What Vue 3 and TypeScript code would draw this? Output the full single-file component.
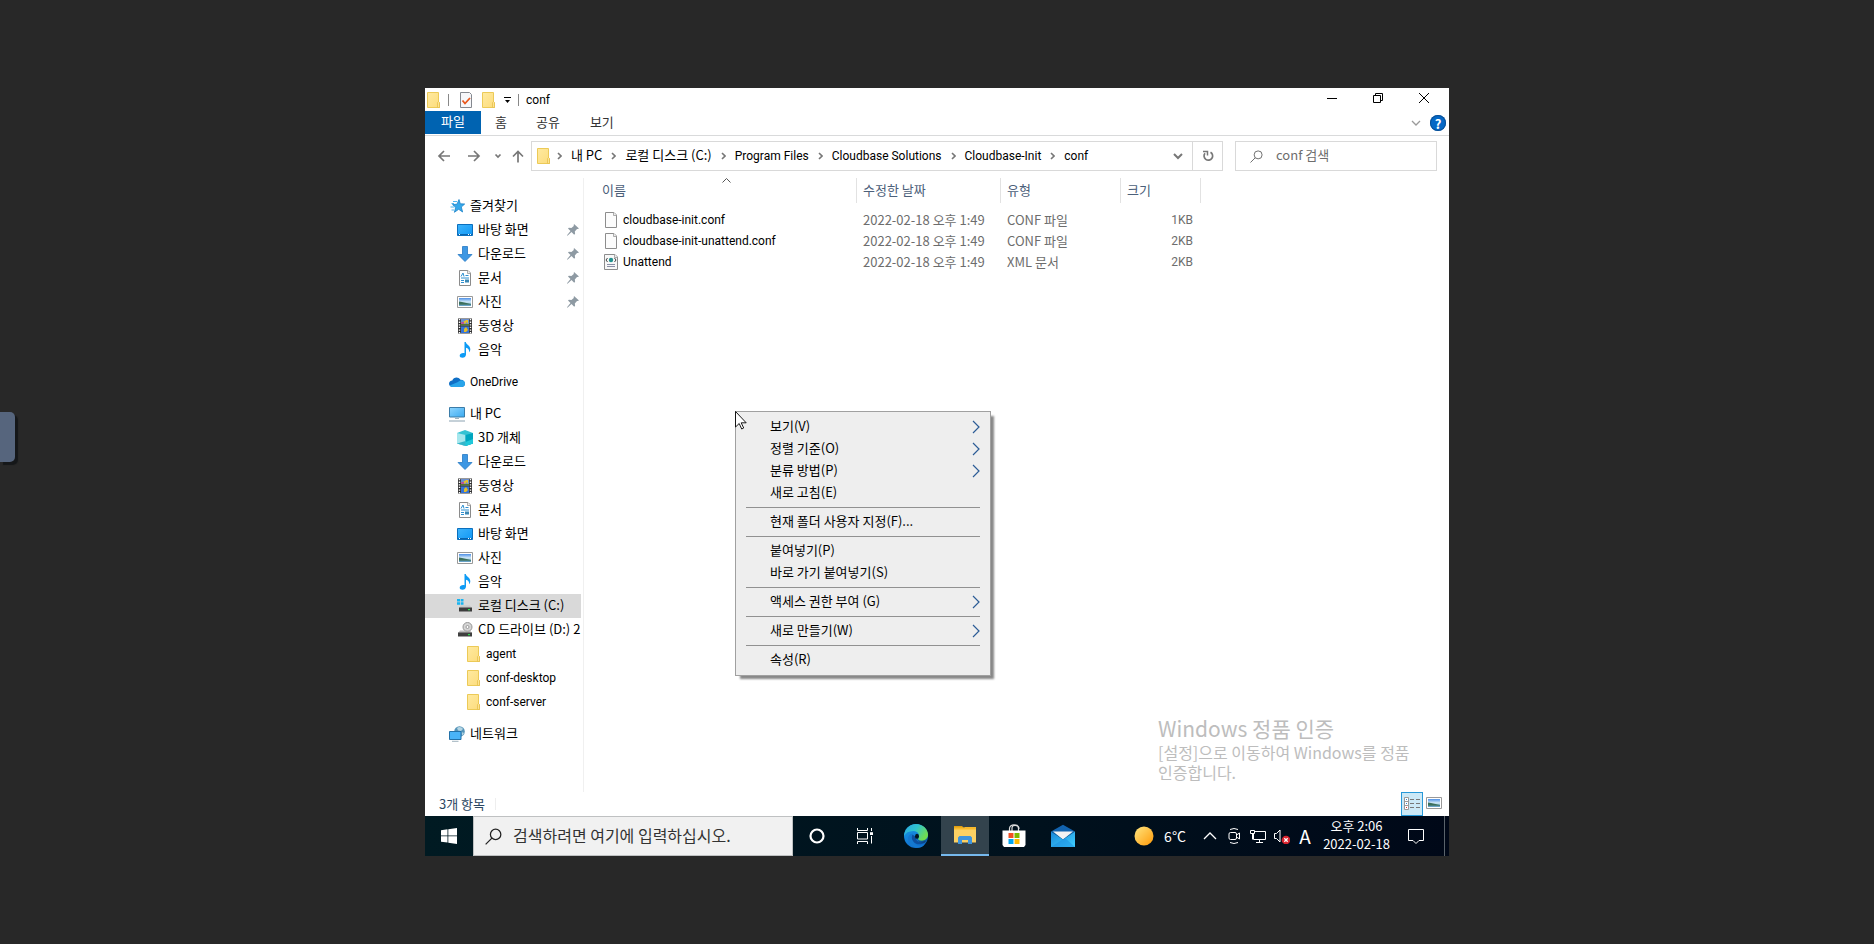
<script setup lang="ts">
import { ref } from 'vue'

interface NavItem {
  icon: string
  label: string
  level: number
  pinned?: boolean
  selected?: boolean
}
interface FileRow {
  icon: string
  name: string
  date: string
  type: string
  size: string
}
interface MenuItem {
  label: string
  sub?: boolean
}

const tabs: string[] = ['홈', '공유', '보기']
const crumbs: string[] = ['내 PC', '로컬 디스크 (C:)', 'Program Files', 'Cloudbase Solutions', 'Cloudbase-Init', 'conf']

const navGroups: NavItem[][] = [
  [
    { icon: 'star', label: '즐겨찾기', level: 0 },
    { icon: 'desktop', label: '바탕 화면', level: 1, pinned: true },
    { icon: 'download', label: '다운로드', level: 1, pinned: true },
    { icon: 'docs', label: '문서', level: 1, pinned: true },
    { icon: 'picture', label: '사진', level: 1, pinned: true },
    { icon: 'video', label: '동영상', level: 1 },
    { icon: 'music', label: '음악', level: 1 },
  ],
  [{ icon: 'cloud', label: 'OneDrive', level: 0 }],
  [
    { icon: 'pc', label: '내 PC', level: 0 },
    { icon: 'cube', label: '3D 개체', level: 1 },
    { icon: 'download', label: '다운로드', level: 1 },
    { icon: 'video', label: '동영상', level: 1 },
    { icon: 'docs', label: '문서', level: 1 },
    { icon: 'desktop', label: '바탕 화면', level: 1 },
    { icon: 'picture', label: '사진', level: 1 },
    { icon: 'music', label: '음악', level: 1 },
    { icon: 'disk', label: '로컬 디스크 (C:)', level: 1, selected: true },
    { icon: 'cd', label: 'CD 드라이브 (D:) 2', level: 1 },
    { icon: 'folder', label: 'agent', level: 2 },
    { icon: 'folder', label: 'conf-desktop', level: 2 },
    { icon: 'folder', label: 'conf-server', level: 2 },
  ],
  [{ icon: 'network', label: '네트워크', level: 0 }],
]

const files: FileRow[] = [
  { icon: 'file', name: 'cloudbase-init.conf', date: '2022-02-18 오후 1:49', type: 'CONF 파일', size: '1KB' },
  { icon: 'file', name: 'cloudbase-init-unattend.conf', date: '2022-02-18 오후 1:49', type: 'CONF 파일', size: '2KB' },
  { icon: 'xml', name: 'Unattend', date: '2022-02-18 오후 1:49', type: 'XML 문서', size: '2KB' },
]

const menuGroups: MenuItem[][] = [
  [
    { label: '보기(V)', sub: true },
    { label: '정렬 기준(O)', sub: true },
    { label: '분류 방법(P)', sub: true },
    { label: '새로 고침(E)' },
  ],
  [{ label: '현재 폴더 사용자 지정(F)...' }],
  [{ label: '붙여넣기(P)' }, { label: '바로 가기 붙여넣기(S)' }],
  [{ label: '액세스 권한 부여 (G)', sub: true }],
  [{ label: '새로 만들기(W)', sub: true }],
  [{ label: '속성(R)' }],
]

const folderQuery = ref('')
const systemQuery = ref('')

// Names without Hangul are set in the Latin face.
const isLatin = (s: string): boolean => !/[가-힣]/.test(s)
</script>

<template>
  <div class="viewer">
    <svg class="defs" aria-hidden="true">
      <defs>
        <linearGradient id="gFolder" x1="0" y1="0" x2="1" y2="1">
          <stop offset="0" stop-color="#ffeaa0" /><stop offset="1" stop-color="#fcdc7c" />
        </linearGradient>
        <linearGradient id="gBlue" x1="0" y1="0" x2="1" y2="1">
          <stop offset="0" stop-color="#3fb4fb" /><stop offset="1" stop-color="#0f97f5" />
        </linearGradient>
        <linearGradient id="gScreen" x1="0" y1="0" x2="1" y2="1">
          <stop offset="0" stop-color="#8fd6ff" /><stop offset="1" stop-color="#3aa9f0" />
        </linearGradient>
        <linearGradient id="gSun" x1="0" y1="0" x2="1" y2="1">
          <stop offset="0" stop-color="#ffe680" /><stop offset="1" stop-color="#ff9a08" />
        </linearGradient>
        <linearGradient id="gEdgeTop" x1="0" y1="0" x2="1" y2="0.5">
          <stop offset="0" stop-color="#2ba8e0" /><stop offset="0.5" stop-color="#2fc3cf" /><stop offset="1" stop-color="#6fdd50" />
        </linearGradient>
        <linearGradient id="gEdgeSide" x1="0" y1="0" x2="0.4" y2="1">
          <stop offset="0" stop-color="#1a9be6" /><stop offset="1" stop-color="#0e70d0" />
        </linearGradient>
        <linearGradient id="gPhoto" x1="0" y1="0" x2="0" y2="1">
          <stop offset="0" stop-color="#4d8fe6" /><stop offset="0.5" stop-color="#d5ebf8" /><stop offset="0.7" stop-color="#8fc0d8" /><stop offset="1" stop-color="#5f9cc4" />
        </linearGradient>
        <linearGradient id="gMail" x1="0" y1="0" x2="1" y2="1">
          <stop offset="0" stop-color="#1a86d8" /><stop offset="1" stop-color="#3fd0ff" />
        </linearGradient>
      </defs>
      <symbol id="i-folder" viewBox="0 0 16 16">
        <path d="M1.500.5h11v9.500l1 1v4.500h-12z" fill="url(#gFolder)" stroke="#ecca57" />
        <path d="M11.500 15.500v-5l1-1 1 1v5z" fill="#fde391" stroke="#e6c04c" stroke-width=".8" />
      </symbol>
      <symbol id="i-star" viewBox="0 0 16 16">
        <path d="M10 1.500l1.300 4.300 4.400.2-3.400 3 1.300 5-3.900-2.700-4.300 3 1.300-5L3.500 6.600l4.500-.4z" fill="#35a8ea" stroke="#1c83c9" stroke-width=".8" />
        <path d="M4 3.500h4M2.500 5.500h2.500M1.500 9h4M2.500 12h2.500" stroke="#4fb6ee" />
      </symbol>
      <symbol id="i-desktop" viewBox="0 0 16 16">
        <path d="M.5 2.500h15v11H.5z" fill="url(#gBlue)" stroke="#0b6fbd" />
        <path d="M1 12.500h14" stroke="#0a64ad" /><path d="M2 12.500h1M11 12.500h1M13 12.500h1" stroke="#fff" />
      </symbol>
      <symbol id="i-download" viewBox="0 0 16 16">
        <path d="M5.500.5h5v8h4.500L8 15.500 1 8.500h4.500z" fill="#3d97e3" stroke="#2678c4" stroke-width=".8" />
      </symbol>
      <symbol id="i-docs" viewBox="0 0 16 16">
        <path d="M2.500.5h8.500l2.500 2.500v12.500h-11z" fill="#fff" stroke="#8b8b8b" /><path d="M10.500.5v3h3" fill="#eee" stroke="#999" stroke-width=".8" />
        <path d="M4 6.500l2-3.500 1 3.500M8.500 5.500h3M4 8h8M4 10.500h3M4 12.500h3" fill="none" stroke="#2d8fd0" /><path d="M8 9.500h4v3H8z" fill="#3b88b5" />
      </symbol>
      <symbol id="i-picture" viewBox="0 0 16 16">
        <path d="M.5 2.500h15v11H.5z" fill="#fff" stroke="#999" /><path d="M2 4h12v8H2z" fill="url(#gPhoto)" /><path d="M2 7.500l3 .5 9 2v.8H2z" fill="#3c6f5c" />
      </symbol>
      <symbol id="i-video" viewBox="0 0 16 16">
        <path d="M1 .5h14v15H1z" fill="#333" /><path d="M4 1h8v6.500H4z" fill="#6b8fd0" /><path d="M4 8.500h8V15H4z" fill="#3574d8" />
        <path d="M6 4l2 2 1.500-2 1.500 2V2H9z" fill="#e5c02e" /><path d="M4 6h8v1.500H4z" fill="#57762d" /><path d="M7 11l2-2 2 3-2 2H7z" fill="#e8bc23" /><path d="M4 4h3v2H4z" fill="#b9539b" />
        <path d="M2.500 1v15M13.500 1v15" stroke="#fff" stroke-width="1.400" stroke-dasharray="1.300 1.300" />
      </symbol>
      <symbol id="i-music" viewBox="0 0 16 16">
        <path d="M7.500 0h1.300c.3 2.500 4.700 3.500 4.500 7.500 0 1.200-.6 2-1.300 2.700.6-2.700-1-4-3-4.500v6.800c0 2-1.700 3.300-3.500 3.300S2.600 14.800 2.700 13.500c.1-1.800 2.600-3 4.800-2.300z" fill="#0d9bf5" />
      </symbol>
      <symbol id="i-cloud" viewBox="0 0 16 16">
        <path d="M3.300 6.500C4.300 3.300 9 1.800 11.500 5.800 14 5.600 16 7.500 16 9.800S14.300 13 12.500 13h-9C1.500 13 0 11.500 0 9.700s1.400-3.200 3.300-3.200z" fill="#0f6fc6" />
        <path d="M.7 11.500L9 8c2-2.200 5-2 5.500-1.200 1 .7 1.500 1.700 1.500 3 0 2-1.600 3.200-3.500 3.200h-9C2.200 13 1.200 12.300.7 11.500z" fill="#28a4ea" />
      </symbol>
      <symbol id="i-pc" viewBox="0 0 16 16">
        <path d="M.5 1.500h15v9.500H.5z" fill="url(#gScreen)" stroke="#3b7ca8" /><path d="M6 12.500h4" stroke="#9fb2bd" /><path d="M0 15h16" stroke="#8ba2b1" />
      </symbol>
      <symbol id="i-cube" viewBox="0 0 16 16">
        <path d="M0 3l8-3 8 3v10.500L8.500 16 0 13.500z" fill="#35c3d3" /><path d="M0 3l8.500 2v11L0 13.500z" fill="#a6e7ed" /><path d="M8.500 5L16 3v10.500L8.500 16z" fill="#00a5bf" /><path d="M0 13.500L8.500 11v5z" fill="#35b5c9" /><path d="M8.500 12l7.500-3v4.500L8.500 16z" fill="#20c8da" />
      </symbol>
      <symbol id="i-disk" viewBox="0 0 16 16">
        <path d="M0 1h3v2.500H0zM3.700 1h2.800v2.500H3.700zM0 4.200h3v2.600H0zM3.700 4.200h2.800v2.600H3.700z" fill="#18b4f0" />
        <path d="M3.500 7.500h9.500l2 3H2z" fill="#c8c8c8" /><path d="M2 9.500h13v4H2z" fill="#3c3c3c" /><path d="M11 11h2v1.200h-2z" fill="#2fe04d" />
      </symbol>
      <symbol id="i-cd" viewBox="0 0 16 16">
        <circle cx="10.500" cy="5" r="4.500" fill="#d5d5d5" stroke="#969696" /><circle cx="10.500" cy="5" r="1.500" fill="#fff" stroke="#888" stroke-width=".8" />
        <path d="M3 8.500h10l2 2.500H1z" fill="#aaa" fill-opacity=".8" /><path d="M1 10.500h14v4H1z" fill="#3f3f3f" /><path d="M11 12h2v1.200h-2z" fill="#2fe04d" />
      </symbol>
      <symbol id="i-network" viewBox="0 0 16 16">
        <circle cx="10.500" cy="5.500" r="5.300" fill="#5594b8" /><path d="M8 2c2-2 5-1 6 1l-2 2-3-.5zM12.500 6l2.500 1-2 3z" fill="#b5d5e3" /><path d="M.5 5.500h11.500v8H.5z" fill="#49b3f7" stroke="#2371a8" /><path d="M3 15.300h6.500" stroke="#9fb2bd" />
      </symbol>
      <symbol id="i-file" viewBox="0 0 16 16">
        <path d="M2.500.5h8.500l2.500 2.500v12.500h-11z" fill="#fcfcfc" stroke="#8d8d8d" /><path d="M10.500.5v3h3" fill="#eee" stroke="#999" stroke-width=".8" />
      </symbol>
      <symbol id="i-xml" viewBox="0 0 16 16">
        <path d="M1.500.5h10.500l2.500 2.500v12.500h-13z" fill="#f8f8f8" stroke="#8d8d8d" /><path d="M11.500.5v3h3" fill="#eee" stroke="#999" stroke-width=".8" />
        <circle cx="8" cy="6" r="2.200" fill="#23918f" /><path d="M4.500 4L3 6l1.500 2M11.500 4L13 6l-1.500 2" fill="none" stroke="#444" /><path d="M4 10.500h8M4 12.500h8" stroke="#8a8fa6" />
      </symbol>
      <symbol id="i-pin" viewBox="0 0 12 12">
        <path d="M7 0l5 4.500-1.300.6-.7-.1L7.800 7.500l.3 2.300-.9.9L4.500 8 .5 11.800 0 11.300 3.500 7 1 4.500l.9-.8 2.500.2L6.800 2l-.1-.8z" fill="#8e9aa3" />
      </symbol>
      <symbol id="i-lens" viewBox="0 0 16 16">
        <circle cx="10" cy="6" r="4.900" fill="none" stroke="currentColor" stroke-width="1.200" /><path d="M6.500 9.500L.6 15.400" stroke="currentColor" stroke-width="1.200" />
      </symbol>
    </svg>

    <button class="handle" type="button" aria-label="Toggle panel"></button>

    <main class="screen">
      <section class="explorer">
        <header class="titlebar">
          <svg class="ico"><use href="#i-folder" /></svg>
          <i class="bar first"></i>
          <button class="quick" type="button" aria-label="속성">
            <svg viewBox="0 0 16 16" class="ico"><path d="M2.500.5h9l2 2v13h-11z" fill="#f6f7fa" stroke="#84888f" /><path d="M4.500 8.500l2.500 3 5-5.500" fill="none" stroke="#e8571c" stroke-width="1.800" /></svg>
          </button>
          <button class="quick" type="button" aria-label="새 폴더"><svg class="ico"><use href="#i-folder" /></svg></button>
          <button class="quick small" type="button" aria-label="빠른 실행 도구 모음">
            <svg viewBox="0 0 8 8" class="tiny"><path d="M0 1.500h7" stroke="#000" /><path d="M1 4h5L3.500 7z" /></svg>
          </button>
          <i class="bar"></i>
          <h1 class="latin">conf</h1>
          <div class="controls">
            <button type="button" aria-label="최소화"><svg viewBox="0 0 10 10"><path d="M0 5.500h10" /></svg></button>
            <button type="button" aria-label="복원"><svg viewBox="0 0 10 10"><path d="M.5 2.500h7v7h-7zM2.500 2.500v-2h7v7h-2" /></svg></button>
            <button type="button" aria-label="닫기"><svg viewBox="0 0 10 10"><path d="M0 0l10 10M10 0L0 10" /></svg></button>
          </div>
        </header>

        <nav class="ribbon">
          <button class="tab active" type="button">파일</button>
          <button v-for="t in tabs" :key="t" class="tab" type="button">{{ t }}</button>
          <button class="expand" type="button" aria-label="리본 확장"><svg viewBox="0 0 10 6"><path d="M1 1l4 4 4-4" fill="none" stroke="#9a9a9a" stroke-width="1.300" /></svg></button>
          <button class="help" type="button" aria-label="도움말">?</button>
        </nav>

        <div class="address">
          <div class="moves">
            <button type="button" aria-label="뒤로"><svg viewBox="0 0 12 12"><path d="M12 6H1M6 1L1 6l5 5" /></svg></button>
            <button class="forward" type="button" aria-label="앞으로"><svg viewBox="0 0 12 12"><path d="M0 6h11M6 1l5 5-5 5" /></svg></button>
            <button class="narrow" type="button" aria-label="최근 위치"><svg viewBox="0 0 12 12"><path d="M3.500 4.500L6 7l2.500-2.500" /></svg></button>
            <button class="up" type="button" aria-label="위로"><svg viewBox="0 0 12 12"><path d="M6 12.500V1.500M1 6.500l5-5 5 5" /></svg></button>
          </div>
          <div class="path">
            <svg class="ico"><use href="#i-folder" /></svg>
            <template v-for="c in crumbs" :key="c">
              <svg class="sep" viewBox="0 0 5 8"><path d="M1 1l3 3-3 3" /></svg>
              <a href="#" :class="{ latin: isLatin(c) }">{{ c }}</a>
            </template>
            <button class="drop" type="button" aria-label="이전 위치"><svg viewBox="0 0 10 7"><path d="M1 1l4 4 4-4" fill="none" stroke="#777" stroke-width="2" /></svg></button>
            <button class="reload" type="button" aria-label="새로 고침">
              <svg viewBox="0 0 12 12"><path d="M8.500 2.200A4.300 4.300 0 1 1 3 3.200" fill="none" stroke="#777" stroke-width="1.700" /><path d="M1 1.500h4.500v4" fill="none" stroke="#777" stroke-width="1.500" /></svg>
            </button>
          </div>
          <label class="find">
            <svg><use href="#i-lens" /></svg>
            <input v-model="folderQuery" type="text" placeholder="conf 검색" aria-label="conf 검색" />
          </label>
        </div>

        <div class="body">
          <aside class="tree">
            <ul v-for="(g, gi) in navGroups" :key="gi">
              <li v-for="n in g" :key="n.label">
                <a href="#" :class="['node', 'l' + n.level, { selected: n.selected }]">
                  <svg class="ico"><use :href="'#i-' + n.icon" /></svg>
                  <span :class="{ latin: isLatin(n.label) }">{{ n.label }}</span>
                  <svg v-if="n.pinned" class="pin"><use href="#i-pin" /></svg>
                </a>
              </li>
            </ul>
          </aside>

          <div class="content">
            <table>
              <thead>
                <tr>
                  <th class="c-name"><div>이름<svg viewBox="0 0 9 5"><path d="M.5 4.500l4-4 4 4" fill="none" stroke="#555" /></svg></div></th>
                  <th class="c-date"><div>수정한 날짜</div></th>
                  <th class="c-type"><div>유형</div></th>
                  <th class="c-size"><div>크기</div></th>
                  <th class="c-rest"></th>
                </tr>
              </thead>
              <tbody>
                <tr v-for="f in files" :key="f.name">
                  <td><a href="#" class="fname"><svg class="ico"><use :href="'#i-' + f.icon" /></svg><span class="latin">{{ f.name }}</span></a></td>
                  <td>{{ f.date }}</td>
                  <td>{{ f.type }}</td>
                  <td class="size latin">{{ f.size }}</td>
                  <td></td>
                </tr>
              </tbody>
            </table>
            <div class="watermark">
              <p class="big">Windows 정품 인증</p>
              <p>[설정]으로 이동하여 Windows를 정품 인증합니다.</p>
            </div>
          </div>
        </div>

        <footer class="status">
          <span>3개 항목</span><i></i>
          <button class="view on" type="button" aria-label="자세히">
            <svg viewBox="0 0 16 14"><path d="M.5.5h4v12h-4zM.5 4.500h4M.5 8.500h4" fill="#fff" stroke="#999" /><path d="M6 2.500h4M12 2.500h4M6 6.500h4M12 6.500h4M6 10.500h4M12 10.500h4" stroke="#777" /><path d="M2 2.500h1M2 6.500h1" stroke="#3a8bd0" /><path d="M2 10.500h1" stroke="#d33" /></svg>
          </button>
          <button class="view thumbs" type="button" aria-label="큰 아이콘"><svg><use href="#i-picture" /></svg></button>
        </footer>
      </section>

      <footer class="taskbar">
        <button class="task start" type="button" aria-label="시작">
          <svg viewBox="0 0 16 16"><path d="M0 2.200L6.500 1.300v6.200H0zM7.300 1.200L16 0v7.500H7.300zM0 8.300h6.500v6.300L0 13.700zM7.300 8.300H16V16l-8.700-1.200z" fill="#fff" /></svg>
        </button>
        <label class="search">
          <svg><use href="#i-lens" /></svg>
          <input v-model="systemQuery" type="text" placeholder="검색하려면 여기에 입력하십시오." aria-label="검색하려면 여기에 입력하십시오." />
        </label>
        <button class="task" type="button" aria-label="Cortana"><svg viewBox="0 0 16 16"><circle cx="8" cy="8" r="6.500" fill="none" stroke="#fff" stroke-width="2.200" /></svg></button>
        <button class="task" type="button" aria-label="작업 보기">
          <svg viewBox="0 0 16 16"><path d="M.5 0v2.500h10V0M.5 16v-2.500h10V16M.5 4.500h10v6.500H.5zM14.500 0v3M14.500 8v7.500" fill="none" stroke="#fff" /><path d="M13 4.200h3v2.800h-3z" fill="#fff" /></svg>
        </button>
        <div class="apps">
          <button class="task" type="button" aria-label="Microsoft Edge">
            <svg class="app" viewBox="0 0 24 24">
              <circle cx="12" cy="12" r="12" fill="url(#gEdgeSide)" />
              <path d="M.2 10.500C1.500 3.500 6.800 0 12 0c7 0 12 5.300 12 10.600 0 3.900-2.600 6.100-5.800 6.100-3 0-4.500-1.300-4-2.300 2.300-3.400-.2-7.400-5-7.300C4.800 7.200 1.500 9 .2 12z" fill="url(#gEdgeTop)" />
              <path d="M9 9.500c-2.500 2.500-2 8.300 2.500 11.200 3 1.800 7 1 9.500-.8-4 5.500-12 5-16-1-2.500-5 0-9 4-9.400z" fill="#1578cf" />
              <path d="M8.500 10.500c-2.700 5 2.500 11.500 9.500 9.500 2-.6 3-1.500 3.500-2.500.4-.7-.2-1-1-.5-4 2-9 1-8.500-4.500-1.500 0-2.500-1.500-3.500-2z" fill="#0d4f9e" />
              <path d="M14.300 13.500c-1.300 1.500-.5 3.200 2.500 3.200 3.200 0 5.700-1.200 7-4 .2 2-.9 4.200-2.300 5.700-4 1-8.500-.5-9-4.900z" fill="#0b2a45" fill-opacity=".35" />
              <ellipse cx="13" cy="12.300" rx="2" ry="2.500" fill="#03161f" />
            </svg>
          </button>
          <button class="task current" type="button" aria-label="파일 탐색기">
            <svg class="app" viewBox="0 0 24 24"><path d="M1 3h8l2 2H1z" fill="#dd9d12" /><path d="M1 4.500h10L12 4h11v3H1z" fill="#f7b92c" /><path d="M1 6.500h22v13H1z" fill="#fcd163" /><path d="M5 21v-6.500l1.500-1.500h11l1.500 1.500V21h-4v-4h-6v4z" fill="#3e94dc" /></svg>
          </button>
          <button class="task" type="button" aria-label="Microsoft Store">
            <svg class="app" viewBox="0 0 24 24"><path d="M7.500 7V4.500C7.500-.5 16.500-.5 16.500 4.500V7M10 7V4c0-4 7-3.500 7 1" fill="none" stroke="#ddd" stroke-width="1.200" /><path d="M.5 6.500h23V21l-1.500 2H2L.5 21z" fill="#fff" /><path d="M6.500 9h5v5h-5z" fill="#f25022" /><path d="M12.500 9h5v5h-5z" fill="#7fba00" /><path d="M6.500 15h5v5h-5z" fill="#00a4ef" /><path d="M12.500 15h5v5h-5z" fill="#ffb900" /></svg>
          </button>
          <button class="task" type="button" aria-label="메일">
            <svg class="app" viewBox="0 0 24 24"><path d="M0 7.500L12 .8l12 6.700-12 8z" fill="#1263ae" /><path d="M2 7.500h20L12 15.500z" fill="#f3f3f3" /><path d="M0 7.500l12 8 12-8V23H0z" fill="url(#gMail)" /><path d="M0 23l14-9 10 9z" fill="#1c8be0" fill-opacity=".5" /></svg>
          </button>
        </div>

        <div class="tray">
          <button class="weather" type="button"><svg viewBox="0 0 20 20"><circle cx="10" cy="10" r="9.500" fill="url(#gSun)" /></svg>6°C</button>
          <button type="button" aria-label="숨겨진 아이콘 표시"><svg viewBox="0 0 16 16"><path d="M2 11l6-6 6 6" stroke-width="1.300" /></svg></button>
          <button type="button" aria-label="카메라"><svg viewBox="0 0 16 16"><rect x="3" y="4.500" width="7.500" height="7" rx="1.500" /><path d="M10.500 7l3-2v6l-3-2M4 1.500q4-2 8 0M4 14.500q4 2 8 0" /></svg></button>
          <button type="button" aria-label="네트워크"><svg viewBox="0 0 16 16"><path d="M5 3.500h10.500v8H3.500V6M9.500 11.500v3M6 14.500h7M.5 2.500h4v3h-4zM2.500 5.500v6" /></svg></button>
          <button type="button" aria-label="소리"><svg viewBox="0 0 16 16"><path d="M.5 5.500h2l3.500-3.500v12l-3.500-3.500h-2z" /><circle cx="12" cy="12" r="4.300" fill="#d9232e" stroke="none" /><path d="M10.300 10.300l3.400 3.400M13.700 10.300l-3.400 3.400" stroke-width="1.300" /></svg></button>
          <button class="ime" type="button">A</button>
          <button class="clock" type="button"><span>오후 2:06</span><span>2022-02-18</span></button>
          <button class="notice" type="button" aria-label="알림"><svg viewBox="0 0 18 18"><path d="M1.500 2.500h15v11H12L9 16.500 6 13.500H1.500z" /></svg></button>
          <i class="peek"></i>
        </div>
      </footer>

      <div class="menu" role="menu">
        <div v-for="(g, i) in menuGroups" :key="i" class="mgroup">
          <button v-for="m in g" :key="m.label" type="button" role="menuitem">
            <span>{{ m.label }}</span>
            <svg v-if="m.sub" viewBox="0 0 8 14"><path d="M1 1l6 6-6 6" fill="none" stroke="#2c5c96" stroke-width="1.200" /></svg>
          </button>
        </div>
      </div>
      <svg class="cursor" viewBox="0 0 12 19"><path d="M.5.5v15.500l3.700-3.500 2.500 5.500 2-1-2.500-5.200h5z" fill="#fff" stroke="#000" stroke-width=".9" /></svg>
    </main>
  </div>
</template>

<style>
body {
  margin: 0;
  background: #282828;
}
</style>

<style scoped>
.viewer {
  position: relative;
  display: flex;
  align-items: center;
  justify-content: center;
  min-height: 100vh;
  background: #282828;
  color: #000;
  font: 13px/20px "Noto Sans CJK KR", sans-serif;
}
.viewer *,
.viewer *::before {
  box-sizing: border-box;
}
.viewer .latin {
  font-family: Roboto, "Noto Sans CJK KR", sans-serif;
  font-size: 12px;
}
.defs {
  position: absolute;
  width: 0;
  height: 0;
}
svg {
  display: block;
  flex: none;
}
button {
  margin: 0;
  padding: 0;
  border: 0;
  background: none;
  color: inherit;
  font: inherit;
}
input {
  flex: 1;
  min-width: 0;
  padding: 0 0 2px;
  border: 0;
  outline: 0;
  background: none;
  color: inherit;
  font: inherit;
}
input::placeholder {
  color: inherit;
  opacity: 1;
}
a {
  color: inherit;
  text-decoration: none;
}
h1,
p,
ul {
  margin: 0;
  padding: 0;
  font-size: inherit;
  font-weight: 400;
  list-style: none;
}
.ico {
  width: 16px;
  height: 16px;
}
.handle {
  position: absolute;
  top: calc(50% - 60px);
  left: 0;
  width: 15px;
  height: 50px;
  border-radius: 0 5px 5px 0;
  background: #56657d;
  box-shadow: 3px 3px 1px #151719;
}
.screen {
  position: relative;
  display: flex;
  flex-direction: column;
  width: 100%;
  max-width: 1024px;
  aspect-ratio: 4 / 3;
  background: #fff;
}
.explorer {
  flex: 1;
  display: flex;
  flex-direction: column;
  min-height: 0;
}

/* title bar */
.titlebar {
  display: flex;
  align-items: center;
  height: 23px;
}
.titlebar > .ico {
  margin-left: 1px;
}
.bar {
  width: 1px;
  height: 12px;
  background: #888;
}
.bar.first {
  margin: 0 9px 0 6px;
}
.quick {
  width: 23px;
}
.quick.small {
  width: 14px;
}
.titlebar h1 {
  margin-left: 7px;
}
.tiny {
  width: 8px;
  height: 8px;
}
.controls {
  display: flex;
  align-self: flex-start;
  margin-left: auto;
  padding-right: 2px;
}
.controls button {
  display: grid;
  place-items: center;
  width: 46px;
  height: 20px;
}
.controls svg {
  width: 10px;
  height: 10px;
  overflow: visible;
  fill: none;
  stroke: #000;
}

/* ribbon */
.ribbon {
  display: flex;
  align-items: center;
  height: 25px;
  border-bottom: 1px solid #d9dadb;
  color: #333;
}
.tab {
  height: 23px;
  padding: 0 14px 4px;
  line-height: 19px;
}
.tab + .tab + .tab {
  padding: 0 15px 4px;
}
.tab.active {
  width: 56px;
  margin-bottom: 1px;
  background: #0063b1;
  color: #fff;
}
.expand {
  margin-left: auto;
}
.expand svg {
  width: 10px;
  height: 6px;
}
.help {
  width: 16px;
  height: 16px;
  margin: 0 3px 0 9px;
  border-radius: 50%;
  background: #0568c6;
  box-shadow: inset 0 0 0 1px #0a4f95;
  color: #fff;
  font-weight: 700;
  line-height: 15px;
}

/* address row */
.address {
  display: flex;
  align-items: center;
  padding: 5px 12px 0 13px;
}
.moves {
  display: flex;
  width: 93px;
}
.moves button {
  width: 12px;
  margin-right: 18px;
}
.moves .forward {
  margin-right: 12px;
}
.moves .narrow {
  margin-right: 8px;
}
.moves .up {
  margin-right: 0;
}
.moves svg {
  width: 12px;
  height: 12px;
  overflow: visible;
  fill: none;
  stroke: #777;
  stroke-width: 1.7;
}
.path {
  flex: 1;
  display: flex;
  align-items: center;
  height: 30px;
  padding-left: 4px;
  border: 1px solid #d9d9d9;
  white-space: nowrap;
}
.path a:not(.latin) {
  padding-bottom: 2px;
}
.path .sep {
  width: 5px;
  height: 8px;
  margin: 0 9px;
  fill: none;
  stroke: #777;
  stroke-width: 1.6;
}
.path .ico + .sep {
  margin-left: 5px;
}
.drop {
  margin-left: auto;
}
.drop svg {
  width: 10px;
  height: 7px;
}
.reload {
  display: grid;
  place-items: center;
  align-self: stretch;
  width: 30px;
  margin-left: 9px;
  border-left: 1px solid #d9d9d9;
}
.reload svg {
  width: 12px;
  height: 12px;
}
.find {
  display: flex;
  align-items: center;
  gap: 13px;
  width: 202px;
  height: 30px;
  margin-left: 12px;
  padding-left: 14px;
  border: 1px solid #d9d9d9;
  color: #6d6d6d;
}
.find svg {
  width: 13px;
  height: 13px;
}

/* body */
.body {
  flex: 1;
  display: flex;
  min-height: 0;
  padding-top: 7px;
}
.tree {
  width: 159px;
  padding-top: 16px;
  border-right: 1px solid #f0f0f0;
}
.tree ul {
  margin-bottom: 8px;
}
.node {
  display: flex;
  align-items: center;
  height: 24px;
  width: 156px;
  padding-left: 24px;
  overflow: hidden;
  white-space: nowrap;
}
.node.l1 {
  padding-left: 32px;
}
.node.l2 {
  padding-left: 41px;
}
.node span {
  margin-left: 5px;
}
.node span:not(.latin) {
  padding-bottom: 2px;
}
.node.l2 span {
  margin-left: 4px;
}
.node.selected {
  background: #d9d9d9;
}
.pin {
  width: 12px;
  height: 12px;
  margin: 0 2px 0 auto;
}
.content {
  position: relative;
  flex: 1;
  min-width: 0;
}
table {
  width: 100%;
  border-collapse: collapse;
  table-layout: fixed;
}
th {
  height: 31px;
  padding: 0;
  color: #4c607a;
  font-weight: 400;
  text-align: left;
  vertical-align: top;
}
th div {
  position: relative;
  height: 25px;
  padding-left: 6px;
  border-right: 1px solid #e2e2e2;
  line-height: 23px;
}
.c-name {
  width: 273px;
}
.c-name div {
  padding-left: 18px;
}
.c-name svg {
  position: absolute;
  top: 0;
  left: calc(50% + 2px);
  width: 9px;
  height: 5px;
}
.c-date {
  width: 144px;
}
.c-type {
  width: 120px;
}
.c-size {
  width: 80px;
}
td {
  height: 21px;
  padding: 0 0 0 6px;
  color: #6d6d6d;
  line-height: 20px;
  white-space: nowrap;
}
td:first-child {
  padding-left: 19px;
  color: #000;
}
td.size {
  padding-right: 8px;
  text-align: right;
}
.fname {
  display: flex;
  align-items: center;
  gap: 4px;
}
.watermark {
  position: absolute;
  right: 28px;
  bottom: 10px;
  width: 263px;
  color: #bdbdbd;
  font-size: 16px;
}
.watermark .big {
  font-size: 21px;
  line-height: 28px;
}

.status {
  display: flex;
  align-items: center;
  height: 24px;
  padding: 0 4px 0 14px;
  color: #2b4661;
}
.status i {
  width: 1px;
  height: 12px;
  margin-left: 10px;
  background: #eee;
}
.view {
  display: grid;
  place-items: center;
  width: 22px;
  height: 24px;
}
.view.thumbs {
  padding-bottom: 2px;
}
.view.on {
  margin-left: auto;
  border: 1px solid #2698d8;
  background: #cbe8f6;
}
.view svg {
  width: 16px;
  height: 14px;
}
.view.thumbs svg {
  height: 16px;
}

/* taskbar */
.taskbar {
  display: flex;
  height: 40px;
  background: linear-gradient(90deg, #001a22, #00111d 60%, #000818);
  color: #fff;
}
.task {
  display: grid;
  place-items: center;
  width: 48px;
  height: 40px;
}
.task svg {
  width: 16px;
  height: 16px;
}
.task svg.app {
  width: 24px;
  height: 24px;
}
.search {
  display: flex;
  align-items: center;
  gap: 11px;
  width: 320px;
  padding-left: 11px;
  border: 1px solid #bfc1c2;
  background: #f1f1f1;
  color: #333;
  font-size: 16px;
}
.search svg {
  width: 17px;
  height: 17px;
  color: #222;
}
.apps {
  display: flex;
  gap: 1px;
  margin-left: 3px;
}
.current {
  border-bottom: 2px solid #76b9ed;
  background: #33434d;
}
.tray {
  display: flex;
  align-items: center;
  margin-left: auto;
}
.tray svg {
  width: 16px;
  height: 16px;
  margin: 0 4px;
  fill: none;
  stroke: #fff;
}
.tray .weather {
  display: flex;
  align-items: center;
  margin-right: 12px;
  font-size: 14px;
}
.tray .weather svg {
  width: 20px;
  height: 20px;
  margin: 0 10px 0 0;
  stroke: none;
}
.ime {
  width: 22px;
  font-size: 19px;
}
.clock {
  display: flex;
  flex-direction: column;
  align-items: center;
  width: 81px;
  padding-bottom: 2px;
  font-size: 13px;
  line-height: 18px;
}
.tray .notice svg {
  width: 18px;
  height: 18px;
  margin: 0 19px 0 10px;
}
.peek {
  align-self: stretch;
  width: 1px;
  margin-right: 4px;
  background: #5a636b;
}

/* context menu */
.menu {
  position: absolute;
  top: 323px;
  left: 310px;
  width: 256px;
  padding: 4px 0;
  border: 1px solid #a0a0a0;
  background: #eee;
  box-shadow: 4px 4px 2px -1px #888;
}
.mgroup + .mgroup::before {
  content: "";
  display: block;
  height: 1px;
  margin: 3px 10px;
  background: #919191;
}
.menu button {
  display: flex;
  align-items: center;
  justify-content: space-between;
  width: 100%;
  height: 22px;
  padding: 0 10px 0 34px;
}
.menu span {
  padding-bottom: 2px;
}
.menu svg {
  width: 8px;
  height: 14px;
}
.cursor {
  position: absolute;
  top: 323px;
  left: 310px;
  width: 12px;
  height: 19px;
}
</style>
